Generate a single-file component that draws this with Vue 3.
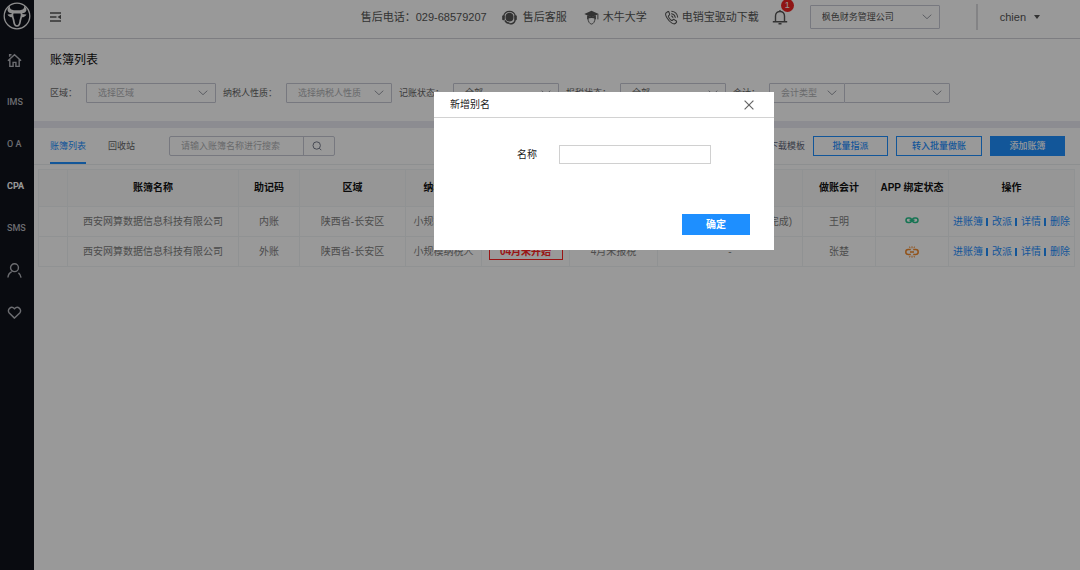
<script setup>
import { ref } from 'vue'

const company = ref('枫色财务管理公司')
const keyword = ref('')
const alias = ref('')
const rows = [
  { name: '西安网算数据信息科技有限公司', code: '内账', area: '陕西省-长安区', type: '小规模纳税人', book: '04月未开始', tax: '4月未报税', progress: '(完成)', owner: '王明', bound: true },
  { name: '西安网算数据信息科技有限公司', code: '外账', area: '陕西省-长安区', type: '小规模纳税人', book: '04月未开始', tax: '4月未报税', progress: '-', owner: '张楚', bound: false }
]
const actions = ['进账簿', '改派', '详情', '删除']
const heads = ['', '账簿名称', '助记码', '区域', '纳税性质', '记账状态', '报税状态', '进度', '做账会计', 'APP 绑定状态', '操作']
</script>

<template>
  <div class="app">
    <nav class="side">
      <svg class="logo" viewBox="0 0 28 28" aria-label="logo">
        <circle cx="14" cy="14" r="12.800" fill="none" stroke="currentColor" stroke-width="1.300" />
        <path d="M7 3.800C3 7 4 11 9 11.400c3 .2 7 .2 10 0 5-.4 6-4.400 2-7.600.6 3-1.300 4.300-4 4.400-2 .1-4 .1-6 0C8.300 8.100 6.400 6.800 7 3.800z" fill="currentColor" />
        <path d="M9.800 10.500c-1.300 3 .4 5 .9 8 .4 2.500.5 5.500 3.300 5.500s2.900-3 3.300-5.500c.5-3 2.200-5 .9-8" fill="none" stroke="currentColor" stroke-width="1.700" />
        <path d="M4.500 12.500 9.500 12l.3 3.300C7.500 15.500 5.500 14.500 4.500 12.500zM23.500 12.500l-5-.5-.3 3.300c2.300.2 4.300-.8 5.300-2.800z" fill="currentColor" />
      </svg>
      <a href="#" aria-label="首页"><svg viewBox="0 0 16 16"><path d="M1 8.200 8 1.800l7 6.400M3 7v7.300h3.500V10h3v4.300H13V7M2.800 4V1.900h2" /></svg></a>
      <a href="#">IMS</a>
      <a href="#">O A</a>
      <a href="#" class="on">CPA</a>
      <a href="#">SMS</a>
      <a href="#" aria-label="用户"><svg viewBox="0 0 16 16"><circle cx="8" cy="5" r="4.200" /><path d="M1 15.500c.2-3 1.600-5.200 4-6.400M12.200 10.500c1.600 1.200 2.500 2.900 2.800 5" /></svg></a>
      <a href="#" aria-label="收藏"><svg viewBox="0 0 16 16"><path d="M8 14 2.400 8.500C-.6 5.200 4.400.2 8 4c3.600-3.800 8.600 1.200 5.600 4.500z" /></svg></a>
    </nav>

    <main class="main">
      <header class="top">
        <button class="plain fold" aria-label="折叠菜单"><svg viewBox="0 0 11 10"><path d="M0 1h11M0 5h6.500M0 9h11" stroke="currentColor" stroke-width="1.500" /><path d="M11 2.800v4.400L7.500 5z" fill="currentColor" /></svg></button>
        <span class="tel">售后电话：029-68579207</span>
        <a href="#" class="svc">
          <svg viewBox="0 0 16 16"><path d="M2 7C1.500-.3 14.500-.3 14 7" fill="none" stroke="currentColor" stroke-width="1.300" /><path d="M3.800 7c0-5.300 8.400-5.300 8.400 0v1.500c0 5-8.400 5-8.400 0z" fill="currentColor" /><rect x=".2" y="5.500" width="2.800" height="5.500" rx="1.200" fill="currentColor" /><rect x="13" y="5.500" width="2.800" height="5.500" rx="1.200" fill="currentColor" /><path d="M14 10.500c-.3 3-2.500 4.300-6 4.300M3 11c1 2 2.500 3 5 3.200" fill="none" stroke="currentColor" stroke-width="1.500" /></svg>
          售后客服</a>
        <a href="#" class="edu">
          <svg viewBox="0 0 16 16"><path d="M8 .8.300 4.300 8 7.700l7.700-3.400z" fill="currentColor" /><path d="M3.300 5.500V10c3-2 6.400-2 9.400 0V5.500L8 7.500z" fill="currentColor" /><path d="M4.200 9c.2 3.500 2 6 3.800 6s3.600-2.500 3.800-6M14.800 4.500V10" fill="none" stroke="currentColor" /></svg>
          木牛大学</a>
        <a href="#" class="drv">
          <svg viewBox="0 0 16 16"><path d="M4.300 1.600 2.200 3C.4 5 4.300 11.600 8.500 14c2 1.200 3.600 1 4.700-.8.500-.8.200-1.300-.4-1.700l-1.900-1.300c-.7-.4-1.200-.2-1.700.6-.5.6-1 .5-1.800-.1C6.200 9.600 5.200 8.300 4.700 7c-.2-.7 0-1 .6-1.300.8-.4.900-.9.600-1.600l-.7-2c-.2-.5-.5-.7-.9-.5zM8 4c2.200.3 3.600 1.700 4 4M8.200 1.400c3.600.4 6 2.800 6.400 6.400M8 6.500c.9.200 1.300.7 1.500 1.500" fill="none" stroke="currentColor" stroke-width="1.100" stroke-linecap="round" /></svg>
          电销宝驱动下载</a>
        <button class="plain bell" aria-label="消息">
          <svg viewBox="0 0 16 16"><path d="M3.500 12.500V7c0-6 9-6 9 0v5.500M.8 12.800h14.400M8 2.500V1M6.500 14.800h3" fill="none" stroke="currentColor" stroke-width="1.400" /></svg>
          <span class="badge">1</span>
        </button>
        <div class="sel company"><select v-model="company" aria-label="公司"><option>枫色财务管理公司</option></select><svg class="chev" viewBox="0 0 10 6"><path d="m.7.7 4.300 4 4.300-4" /></svg></div>
        <button class="plain user">chien <i class="caret"></i></button>
      </header>

      <section class="filters">
        <h1>账簿列表</h1>
        <form class="filter-row" @submit.prevent>
          <label for="area">区域：</label>
          <div class="sel wide ph"><select id="area"><option>选择区域</option></select><svg class="chev" viewBox="0 0 10 6"><path d="m.7.7 4.300 4 4.300-4" /></svg></div>
          <label for="nature">纳税人性质：</label>
          <div class="sel ph"><select id="nature"><option>选择纳税人性质</option></select><svg class="chev" viewBox="0 0 10 6"><path d="m.7.7 4.300 4 4.300-4" /></svg></div>
          <label for="book">记账状态：</label>
          <div class="sel"><select id="book"><option>全部</option></select><svg class="chev" viewBox="0 0 10 6"><path d="m.7.7 4.300 4 4.300-4" /></svg></div>
          <label for="tax">报税状态：</label>
          <div class="sel"><select id="tax"><option>全部</option></select><svg class="chev" viewBox="0 0 10 6"><path d="m.7.7 4.300 4 4.300-4" /></svg></div>
          <label for="acc">会计：</label>
          <div class="pair">
            <div class="sel short ph"><select id="acc"><option>会计类型</option></select><svg class="chev" viewBox="0 0 10 6"><path d="m.7.7 4.300 4 4.300-4" /></svg></div>
            <div class="sel joined"><select aria-label="会计人员"><option></option></select><svg class="chev" viewBox="0 0 10 6"><path d="m.7.7 4.300 4 4.300-4" /></svg></div>
          </div>
        </form>
      </section>

      <section class="bar">
        <a href="#" class="tab active">账簿列表</a>
        <a href="#" class="tab">回收站</a>
        <form class="search" @submit.prevent>
          <input v-model="keyword" aria-label="搜索账簿" placeholder="请输入账簿名称进行搜索">
          <button aria-label="搜索"><svg viewBox="0 0 10 10"><circle cx="4.700" cy="4.500" r="3.700" /><path d="m7.300 7.200 2 2" /></svg></button>
        </form>
        <a href="#" class="tpl">下载模板</a>
        <button class="btn">批量指派</button>
        <button class="btn long">转入批量做账</button>
        <button class="btn solid">添加账簿</button>
      </section>

      <div class="table-wrap">
        <table>
          <colgroup>
            <col class="c1"><col><col class="c3"><col class="c4"><col class="c5"><col class="c6"><col class="c6"><col class="c8"><col class="c9"><col class="c9"><col class="c11">
          </colgroup>
          <thead><tr><th v-for="(h, i) in heads" :key="i">{{ h }}</th></tr></thead>
          <tbody>
            <tr v-for="(r, i) in rows" :key="i">
              <td></td>
              <td>{{ r.name }}</td>
              <td>{{ r.code }}</td>
              <td>{{ r.area }}</td>
              <td>{{ r.type }}</td>
              <td><span class="state">{{ r.book }}</span></td>
              <td>{{ r.tax }}</td>
              <td :class="{ end: r.bound }">{{ r.progress }}</td>
              <td>{{ r.owner }}</td>
              <td>
                <svg v-if="r.bound" class="link ok" viewBox="0 0 14 12"><rect x="1" y="2" width="5.500" height="4.400" rx="2.200" /><rect x="7.500" y="2" width="5.500" height="4.400" rx="2.200" /><path d="M4.500 4.200h5" /></svg>
                <svg v-else class="link off" viewBox="0 0 14 12"><path d="M5.800 3.600H3.200a2.300 2.300 0 0 0 0 4.800h2.600M8.200 3.600h2.600a2.300 2.300 0 0 1 0 4.800H8.200M5 6h4" /><path class="thin" d="M7 .3v2M4.500.6l.5 1.400M9.500.6 9 2M7 9.700v2M4.500 11.400l.5-1.400M9.500 11.400 9 10" /></svg>
              </td>
              <td><div class="acts"><a v-for="a in actions" :key="a" href="#">{{ a }}</a></div></td>
            </tr>
          </tbody>
        </table>
      </div>
    </main>

    <div class="mask">
      <form class="dialog" role="dialog" aria-labelledby="dlg-title" @submit.prevent>
        <div class="dlg-head">
          <h2 id="dlg-title">新增别名</h2>
          <button type="button" class="plain" aria-label="关闭"><svg viewBox="0 0 10 10"><path d="m.6.600 8.800 8.800M9.400.600.6 9.400" /></svg></button>
        </div>
        <div class="dlg-body">
          <label for="alias">名称</label>
          <input id="alias" v-model="alias">
        </div>
        <div class="dlg-foot"><button class="confirm">确定</button></div>
      </form>
    </div>
  </div>
</template>

<style>
body { margin: 0; }
</style>

<style scoped>
.app { display: flex; min-height: 100vh; background: #fff; color: #666; font: 9px/14px "Liberation Sans", "Noto Sans CJK SC", sans-serif; }
.app * { box-sizing: border-box; }
a { color: inherit; text-decoration: none; }
button, input, select { font: inherit; color: inherit; border-radius: 0; margin: 0; padding: 0; }
button { cursor: pointer; }
.plain { border: 0; background: none; }
svg { display: block; flex: none; }

.side { width: 34px; flex: none; background: #10131c; color: #b4b6bc; display: flex; flex-direction: column; font: 500 9px/14px Roboto, sans-serif; }
.logo { width: 28px; height: 28px; margin: 2px 0 9px 3px; color: #eee; }
.side a { height: 42px; padding-left: 7px; display: flex; align-items: center; }
.side a.on { color: #fff; font-weight: bold; }
.side a svg { width: 15px; height: 15px; fill: none; stroke: currentColor; stroke-width: 1.5; }

.main { flex: 1; min-width: 0; }
.top { height: 39px; border-bottom: 1px solid #d0d1d8; padding: 0 40px 4px 16px; display: flex; align-items: center; font-size: 11px; color: #555; }
.fold { margin-right: auto; }
.fold svg { width: 11px; height: 10px; }
.top a { display: flex; align-items: center; }
.top a svg { width: 15px; height: 15px; }
.svc { margin-left: 15px; }
.svc svg { margin-right: 6px; }
.edu { margin-left: 17px; }
.edu svg { margin-right: 4px; }
.drv { margin-left: 17px; }
.drv svg { margin-right: 3px; }
.bell { position: relative; margin: 0 22px 0 13px; }
.bell svg { width: 16px; height: 16px; }
.badge { position: absolute; left: 9px; top: -10px; width: 13px; height: 13px; border-radius: 50%; background: #ee2424; color: #fff; font-size: 9px; line-height: 13px; text-align: center; }
.user { margin-left: 36px; padding-left: 22px; height: 26px; border-left: 2px solid #dadade; display: flex; align-items: center; gap: 8px; }
.caret { border: 3px solid transparent; border-top: 4px solid #555; border-bottom: 0; }

.sel { position: relative; width: 106px; height: 20px; flex: none; }
.sel select { width: 100%; height: 100%; padding: 0 11px; appearance: none; background: #fff; border: 1px solid #c6c9d4; border-radius: 1px; }
.ph select { color: #afb0b4; }
.wide { width: 130px; }
.short { width: 76px; }
.company { width: 130px; height: 24px; font-size: 9px; }
.chev { position: absolute; right: 8px; top: 50%; margin-top: -3px; width: 10px; height: 6px; fill: none; stroke: #999ca5; pointer-events: none; }

.filters { height: 82px; padding: 13px 16px 0; }
h1 { margin: 0 0 15px; font-size: 12px; line-height: 16px; font-weight: normal; color: #111; }
.filter-row { display: flex; align-items: center; }
.filter-row label { white-space: nowrap; margin-right: 9px; }
.filter-row .sel { margin-right: 7px; }
.pair { display: flex; }
.filter-row .pair .sel { margin-right: 0; }
.pair .joined { margin-left: -1px; }

.bar { height: 44px; border-top: 7px solid #e9eaf2; border-bottom: 1px solid #eceef0; padding: 0 15px 0 16px; display: flex; align-items: center; }
.tab { height: 36px; line-height: 36px; margin-right: 22px; border-bottom: 2px solid transparent; }
.tab.active { color: #1e8fff; border-color: #1e8fff; }
.search { display: flex; width: 166px; height: 20px; margin-left: 12px; margin-right: auto; border: 1px solid #c6c9d4; border-radius: 2px; }
.search input { flex: 1; min-width: 0; border: 0; padding: 0 11px; background: none; outline: 0; }
.search input::placeholder { color: #afb0b4; }
.search button { width: 31px; border: 0; border-left: 1px solid #c6c9d4; background: none; padding-left: 8px; }
.search svg { width: 10px; height: 10px; fill: none; stroke: #777c8c; }
.tpl { color: #606478; }
.btn { width: 75px; height: 20px; margin-left: 8px; border: 1px solid #1e8fff; color: #1e8fff; background: #fff; font-weight: 500; }
.btn.long { width: 86px; }
.btn.solid { background: #1e8fff; color: #fff; }

.table-wrap { padding: 4px 5px 0 4px; }
table { width: 100%; table-layout: fixed; border-collapse: collapse; font-size: 10px; color: #808080; }
th, td { border: 1px solid #f0f3f5; padding: 0; text-align: center; white-space: nowrap; overflow: hidden; }
th { height: 37px; background: #fbfbfb; color: #111; }
td { height: 30px; }
.c1 { width: 29px; }
.c3 { width: 61px; }
.c4 { width: 106px; }
.c5 { width: 76px; }
.c6 { width: 88px; }
.c8 { width: 145px; }
.c9 { width: 73px; }
.c11 { width: 126px; }
.state { display: inline-block; width: 74px; line-height: 14px; border: 1px solid #f22; color: #f22; font-weight: bold; }
td.end { text-align: right; padding-right: 10px; }
.link { width: 14px; height: 12px; margin: 0 auto; fill: none; stroke-width: 1.5; }
.ok { stroke: #24c28a; }
.off { stroke: #f48a2c; }
.thin { stroke-width: 1; }
.acts { display: flex; justify-content: center; align-items: center; color: #1e8fff; line-height: 14px; }
.acts a + a { display: flex; align-items: center; }
.acts a + a::before { content: ""; width: 2px; height: 8px; margin: 0 4px 0 3px; background: #1e8fff; }

.mask { position: fixed; inset: 0; background: rgba(0, 0, 0, .4); display: flex; align-items: flex-start; justify-content: center; padding: 92px 0 0 128px; }
.dialog { width: 340px; background: #fff; color: #222; font-size: 10px; }
.dlg-head { height: 26px; padding: 0 20px 0 16px; border-bottom: 1px solid #d2d2d2; display: flex; align-items: center; justify-content: space-between; }
h2 { margin: 0; font-size: 10px; font-weight: normal; }
.dlg-head svg { width: 10px; height: 10px; fill: none; stroke: #666; stroke-width: 1.2; }
.dlg-body { padding: 27px 63px 50px 83px; display: flex; align-items: center; justify-content: space-between; }
.dlg-body input { width: 152px; height: 19px; border: 1px solid #d0d0d0; padding: 0 6px; }
.dlg-foot { padding: 0 24px 15px; display: flex; justify-content: flex-end; }
.confirm { width: 68px; height: 21px; border: 0; background: #1e8fff; color: #fff; font-weight: bold; }
</style>
